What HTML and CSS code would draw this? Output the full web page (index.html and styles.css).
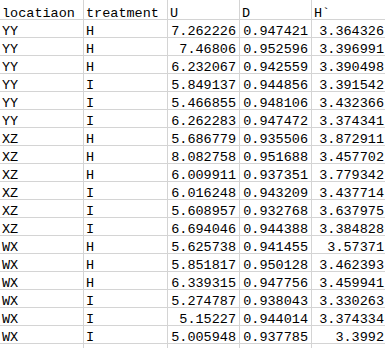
FILE: index.html
```html
<!DOCTYPE html>
<html>
<head>
<meta charset="utf-8">
<link rel="stylesheet" href="styles.css">
</head>
<body>
<div class="sheet">
  <div class="c">locatiaon</div><div class="c">treatment</div><div class="c">U</div><div class="c">D</div><div class="c">H`</div>
  <div class="c">YY</div><div class="c">H</div><div class="c n">7.262226</div><div class="c n">0.947421</div><div class="c n">3.364326</div>
  <div class="c">YY</div><div class="c">H</div><div class="c n">7.46806</div><div class="c n">0.952596</div><div class="c n">3.396991</div>
  <div class="c">YY</div><div class="c">H</div><div class="c n">6.232067</div><div class="c n">0.942559</div><div class="c n">3.390498</div>
  <div class="c">YY</div><div class="c">I</div><div class="c n">5.849137</div><div class="c n">0.944856</div><div class="c n">3.391542</div>
  <div class="c">YY</div><div class="c">I</div><div class="c n">5.466855</div><div class="c n">0.948106</div><div class="c n">3.432366</div>
  <div class="c">YY</div><div class="c">I</div><div class="c n">6.262283</div><div class="c n">0.947472</div><div class="c n">3.374341</div>
  <div class="c">XZ</div><div class="c">H</div><div class="c n">5.686779</div><div class="c n">0.935506</div><div class="c n">3.872911</div>
  <div class="c">XZ</div><div class="c">H</div><div class="c n">8.082758</div><div class="c n">0.951688</div><div class="c n">3.457702</div>
  <div class="c">XZ</div><div class="c">H</div><div class="c n">6.009911</div><div class="c n">0.937351</div><div class="c n">3.779342</div>
  <div class="c">XZ</div><div class="c">I</div><div class="c n">6.016248</div><div class="c n">0.943209</div><div class="c n">3.437714</div>
  <div class="c">XZ</div><div class="c">I</div><div class="c n">5.608957</div><div class="c n">0.932768</div><div class="c n">3.637975</div>
  <div class="c">XZ</div><div class="c">I</div><div class="c n">6.694046</div><div class="c n">0.944388</div><div class="c n">3.384828</div>
  <div class="c">WX</div><div class="c">H</div><div class="c n">5.625738</div><div class="c n">0.941455</div><div class="c n">3.57371</div>
  <div class="c">WX</div><div class="c">H</div><div class="c n">5.851817</div><div class="c n">0.950128</div><div class="c n">3.462393</div>
  <div class="c">WX</div><div class="c">H</div><div class="c n">6.339315</div><div class="c n">0.947756</div><div class="c n">3.459941</div>
  <div class="c">WX</div><div class="c">I</div><div class="c n">5.274787</div><div class="c n">0.938043</div><div class="c n">3.330263</div>
  <div class="c">WX</div><div class="c">I</div><div class="c n">5.15227</div><div class="c n">0.944014</div><div class="c n">3.374334</div>
  <div class="c">WX</div><div class="c">I</div><div class="c n">5.005948</div><div class="c n">0.937785</div><div class="c n">3.3992</div>
  <div class="c"></div><div class="c"></div><div class="c"></div><div class="c"></div><div class="c"></div>
</div>
</body>
</html>
```

FILE: styles.css
```css
html, body {
  margin: 0;
  padding: 0;
  background: #ffffff;
  overflow: hidden;
}

.sheet {
  display: grid;
  grid-template-columns: 84px 84px 72px 72px 76px;
  grid-template-rows: 20px repeat(19, 18px);
  font-family: "Liberation Mono", "DejaVu Sans Mono", monospace;
  font-size: 13.5px;
  color: #000000;
}

.c {
  box-sizing: border-box;
  border-right: 1px solid #d4d4d4;
  border-bottom: 1px solid #d4d4d4;
  display: flex;
  align-items: flex-end;
  padding: 0 2px;
  line-height: 10px;
  white-space: nowrap;
  overflow: hidden;
}

.n {
  justify-content: flex-end;
  padding-right: 3px;
}
```
